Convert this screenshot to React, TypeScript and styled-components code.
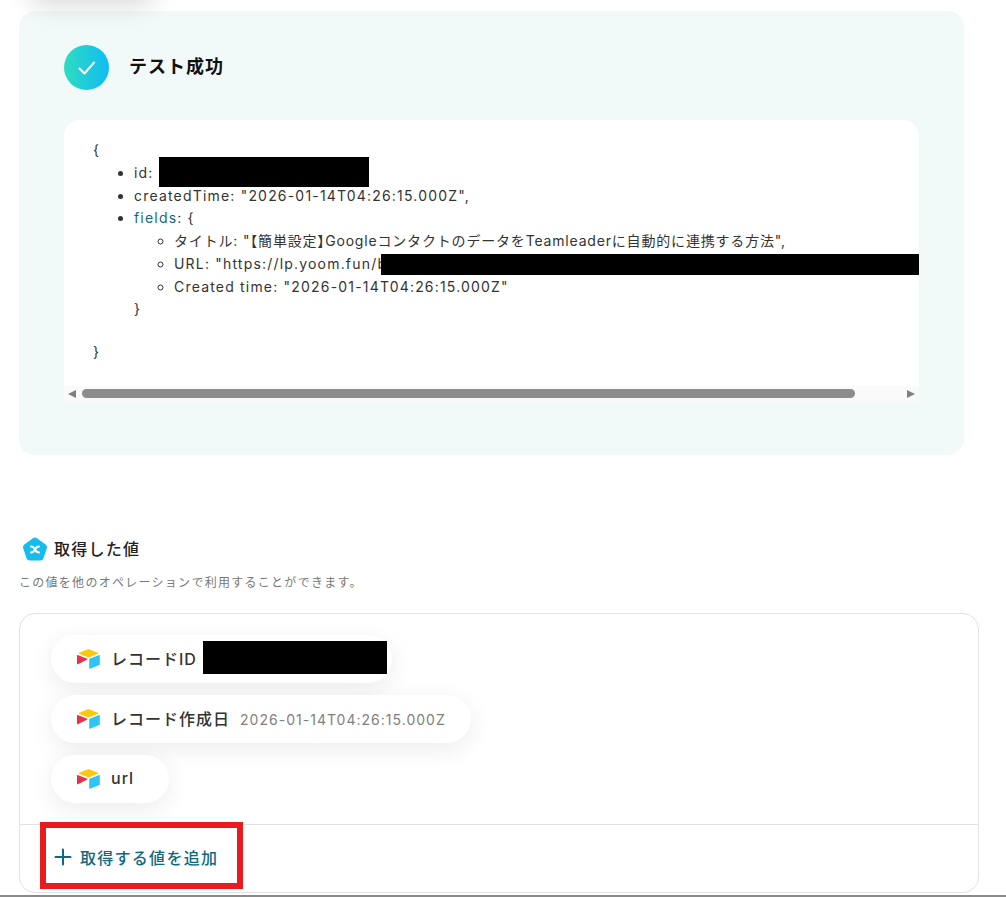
import * as React from 'react';
import styled, { createGlobalStyle } from 'styled-components';

const GlobalStyle = createGlobalStyle`
    html, body {
        margin: 0;
        padding: 0;
        background: #ffffff;
    }

    body {
        font-family: Inter, "Noto Sans CJK JP", sans-serif;
        letter-spacing: 0.08em;
        color: #222222;
    }
`;

const Page = styled.div`
    position: relative;
    width: 1006px;
    height: 897px;
    overflow: hidden;
    padding: 11px 27px 0 19px;
    box-sizing: border-box;
`;

const TopShadow = styled.div`
    position: absolute;
    left: 36px;
    top: -26px;
    width: 112px;
    height: 20px;
    border-radius: 20px;
    box-shadow: 0 4px 24px 8px rgba(0, 0, 0, 0.14);
`;

const BottomRule = styled.div`
    position: absolute;
    left: 0;
    right: 0;
    bottom: 0;
    height: 2px;
    background: #8a8a8a;
`;

const ResultPanel = styled.section`
    width: 945px;
    height: 444px;
    box-sizing: border-box;
    padding: 34px 45px 0;
    background: #f1faf9;
    border-radius: 16px;
`;

const ResultHeader = styled.div`
    display: flex;
    align-items: center;
    gap: 20px;
    height: 45px;
    margin-bottom: 30px;
`;

const CheckBadge = styled.div`
    width: 45px;
    height: 45px;
    border-radius: 50%;
    background: linear-gradient(90deg, #2fdcc0, #0fbcf2);
    display: flex;
    align-items: center;
    justify-content: center;
`;

const ResultTitle = styled.h2`
    margin: 0 0 2px;
    font-size: 18px;
    line-height: 1;
    font-weight: 700;
    letter-spacing: 1px;
    color: #111111;
`;

const CodeCard = styled.div`
    width: 855px;
    height: 281px;
    background: #ffffff;
    border-radius: 16px 16px 0 0;
    overflow: hidden;
    display: flex;
    flex-direction: column;
`;

const CodeBody = styled.div`
    flex: 1;
    padding: 19px 0 0 29px;
    font-size: 14px;
    line-height: 22.75px;
    letter-spacing: 1.19px;
    color: #333333;
    white-space: nowrap;
    overflow: hidden;
`;

const CodeList = styled.ul<{ $nested?: boolean }>`
    margin: 0;
    padding-left: ${props => (props.$nested ? '40px' : '41px')};
    list-style-type: ${props => (props.$nested ? 'circle' : 'disc')};
`;

const TitleLine = styled.li`
    letter-spacing: 0.82px;
`;

const FieldKey = styled.span`
    color: #0f6a80;
`;

const Bracket = styled.span`
    font-feature-settings: "halt";
`;

const ClosingBrace = styled.div<{ $indent?: boolean; $gap?: boolean }>`
    padding-left: ${props => (props.$indent ? '41px' : '0')};
    margin-top: ${props => (props.$gap ? '20px' : '0')};
`;

const Redacted = styled.span<{ $width: number; $height: number }>`
    display: inline-block;
    width: ${props => props.$width}px;
    height: ${props => props.$height}px;
    background: #000000;
    vertical-align: middle;
`;

const IdRedacted = styled(Redacted)`
    margin: -10px 0 -6px 0;
`;

const UrlRedacted = styled(Redacted)`
    margin: 0 0 0 -6px;
`;

const ScrollBar = styled.div`
    height: 15px;
    flex: none;
    background: #fafafa;
    display: flex;
    align-items: center;
    padding: 0 4px;
    gap: 6px;
`;

const ScrollArrow = styled.span<{ $right?: boolean }>`
    width: 0;
    height: 0;
    border-top: 4.5px solid transparent;
    border-bottom: 4.5px solid transparent;
    border-left: ${props => (props.$right ? '8px solid #808080' : '0')};
    border-right: ${props => (props.$right ? '0' : '8px solid #808080')};
`;

const ScrollThumb = styled.span`
    width: 773px;
    height: 9px;
    background: #8c8c8c;
    border-radius: 5px;
`;

const ScrollSpace = styled.span`
    flex: 1;
`;

const ValuesHeading = styled.div`
    display: flex;
    align-items: center;
    gap: 6px;
    margin: 81px 0 0 3px;
    height: 26px;
`;

const ValuesTitle = styled.h3`
    margin: 0;
    font-size: 16px;
    line-height: 26px;
    font-weight: 500;
    color: #222222;
`;

const ValuesNote = styled.p`
    margin: 12px 0 0;
    font-size: 12px;
    line-height: 18px;
    color: #777777;
`;

const ValuesCard = styled.div`
    width: 960px;
    height: 280px;
    margin-top: 21px;
    box-sizing: border-box;
    border: 1px solid #e2e2e2;
    border-radius: 16px;
    display: flex;
    flex-direction: column;
`;

const PillList = styled.div`
    height: 210px;
    box-sizing: border-box;
    padding: 21px 0 0 31px;
    display: flex;
    flex-direction: column;
    align-items: flex-start;
    gap: 12px;
`;

const Pill = styled.div`
    height: 48px;
    box-sizing: border-box;
    padding: 0 25px 0 26px;
    display: flex;
    align-items: center;
    background: #ffffff;
    border-radius: 24px;
    box-shadow: 0 6px 24px rgba(0, 0, 0, 0.08);
`;

const PillLabel = styled.span`
    margin: 0 0 2px 11px;
    font-size: 16px;
    font-weight: 500;
    letter-spacing: 1px;
    color: #333333;
`;

const PillValue = styled.span`
    margin-left: 10px;
    font-size: 14px;
    letter-spacing: 1.02px;
    color: #808080;
`;

const PillRedacted = styled(Redacted)`
    margin: -4px -20px 0 6px;
`;

const CardFooter = styled.div`
    position: relative;
    flex: 1;
    border-top: 1px solid #e2e2e2;
    display: flex;
    align-items: center;
    gap: 8px;
    padding: 0 0 3px 34px;
`;

const AddLabel = styled.span`
    font-size: 16px;
    font-weight: 500;
    color: #0f6a80;
`;

const RedFrame = styled.div`
    position: absolute;
    left: 20px;
    top: -3px;
    width: 203px;
    height: 67px;
    box-sizing: border-box;
    border: 6px solid #e81c1c;
`;

const AirtableIcon: React.FC = () => (
    <svg width="23" height="20" viewBox="0 0 23 20">
        <path d="M10.300.4 1.700 3.900c-.4.200-.4.600 0 .8l8.600 3.400c.8.300 1.600.300 2.400 0l8.600-3.400c.4-.2.400-.6 0-.8L12.700.4c-.8-.3-1.600-.3-2.400 0z" fill="#fcc80a" />
        <path d="M12.200 10.300v8.900c0 .4.400.6.700.5l9.500-3.700c.3-.1.400-.3.400-.5V6.500c0-.4-.4-.6-.7-.5l-9.500 3.800c-.2.100-.4.300-.4.500z" fill="#2ec4f6" />
        <path d="M10.300 10.500 .9 15.300c-.4.200-.9-.1-.9-.5V6.600c0-.2.100-.3.200-.4.100-.1.400-.1.500-.1l9.600 3.600c.4.200.4.600 0 .8z" fill="#e8304f" />
    </svg>
);

const FIELDS = [
    { label: 'レコードID', redacted: true },
    { label: 'レコード作成日', value: '2026-01-14T04:26:15.000Z' },
    { label: 'url', value: '' },
];

export default function App() {
    return (
        <Page>
            <GlobalStyle />
            <TopShadow />
            <ResultPanel>
                <ResultHeader>
                    <CheckBadge>
                        <svg width="20" height="16" viewBox="0 0 20 16" fill="none">
                            <path d="M2.500 8.500 7.500 13.500 17 2.500" stroke="#ffffff" strokeWidth="2" strokeLinecap="round" strokeLinejoin="round" />
                        </svg>
                    </CheckBadge>
                    <ResultTitle>テスト成功</ResultTitle>
                </ResultHeader>
                <CodeCard>
                    <CodeBody>
                        <div>{'{'}</div>
                        <CodeList>
                            <li>id: <IdRedacted $width={210} $height={30} /></li>
                            <li>createdTime: "2026-01-14T04:26:15.000Z",</li>
                            <li>
                                <FieldKey>fields</FieldKey>: {'{'}
                                <CodeList $nested>
                                    <TitleLine>タイトル: "<Bracket>【</Bracket>簡単設定<Bracket>】</Bracket>GoogleコンタクトのデータをTeamleaderに自動的に連携する方法",</TitleLine>
                                    <li>URL: "https://lp.yoom.fun/b<UrlRedacted $width={540} $height={21} /></li>
                                    <li>Created time: "2026-01-14T04:26:15.000Z"</li>
                                </CodeList>
                            </li>
                        </CodeList>
                        <ClosingBrace $indent>{'}'}</ClosingBrace>
                        <ClosingBrace $gap>{'}'}</ClosingBrace>
                    </CodeBody>
                    <ScrollBar>
                        <ScrollArrow />
                        <ScrollThumb />
                        <ScrollSpace />
                        <ScrollArrow $right />
                    </ScrollBar>
                </CodeCard>
            </ResultPanel>

            <ValuesHeading>
                <svg width="26" height="25" viewBox="0 0 26 25">
                    <path d="M11 1.300a3.400 3.400 0 0 1 4 0l8.600 6.200a3.400 3.400 0 0 1 1.200 3.800l-3.300 10a3.400 3.400 0 0 1-3.200 2.300H7.700a3.400 3.400 0 0 1-3.200-2.300l-3.300-10a3.400 3.400 0 0 1 1.200-3.800z" fill="#14bdee" />
                    <path d="M9 9.500c2.200 0 3.300 1.500 4 3s1.800 3 4 3M17 9.500c-2.200 0-3.300 1.500-4 3s-1.800 3-4 3" stroke="#ffffff" strokeWidth="2" fill="none" strokeLinecap="round" />
                </svg>
                <ValuesTitle>取得した値</ValuesTitle>
            </ValuesHeading>
            <ValuesNote>この値を他のオペレーションで利用することができます。</ValuesNote>

            <ValuesCard>
                <PillList>
                    {FIELDS.map(field => (
                        <Pill key={field.label}>
                            <AirtableIcon />
                            <PillLabel>{field.label}</PillLabel>
                            {field.redacted ? (
                                <PillRedacted $width={184} $height={33} />
                            ) : (
                                <PillValue>{field.value}</PillValue>
                            )}
                        </Pill>
                    ))}
                </PillList>
                <CardFooter>
                    <svg width="18" height="18" viewBox="0 0 18 18">
                        <path d="M9 1.500v15M1.500 9h15" stroke="#0f6a80" strokeWidth="2" strokeLinecap="round" />
                    </svg>
                    <AddLabel>取得する値を追加</AddLabel>
                    <RedFrame />
                </CardFooter>
            </ValuesCard>
            <BottomRule />
        </Page>
    );
}
